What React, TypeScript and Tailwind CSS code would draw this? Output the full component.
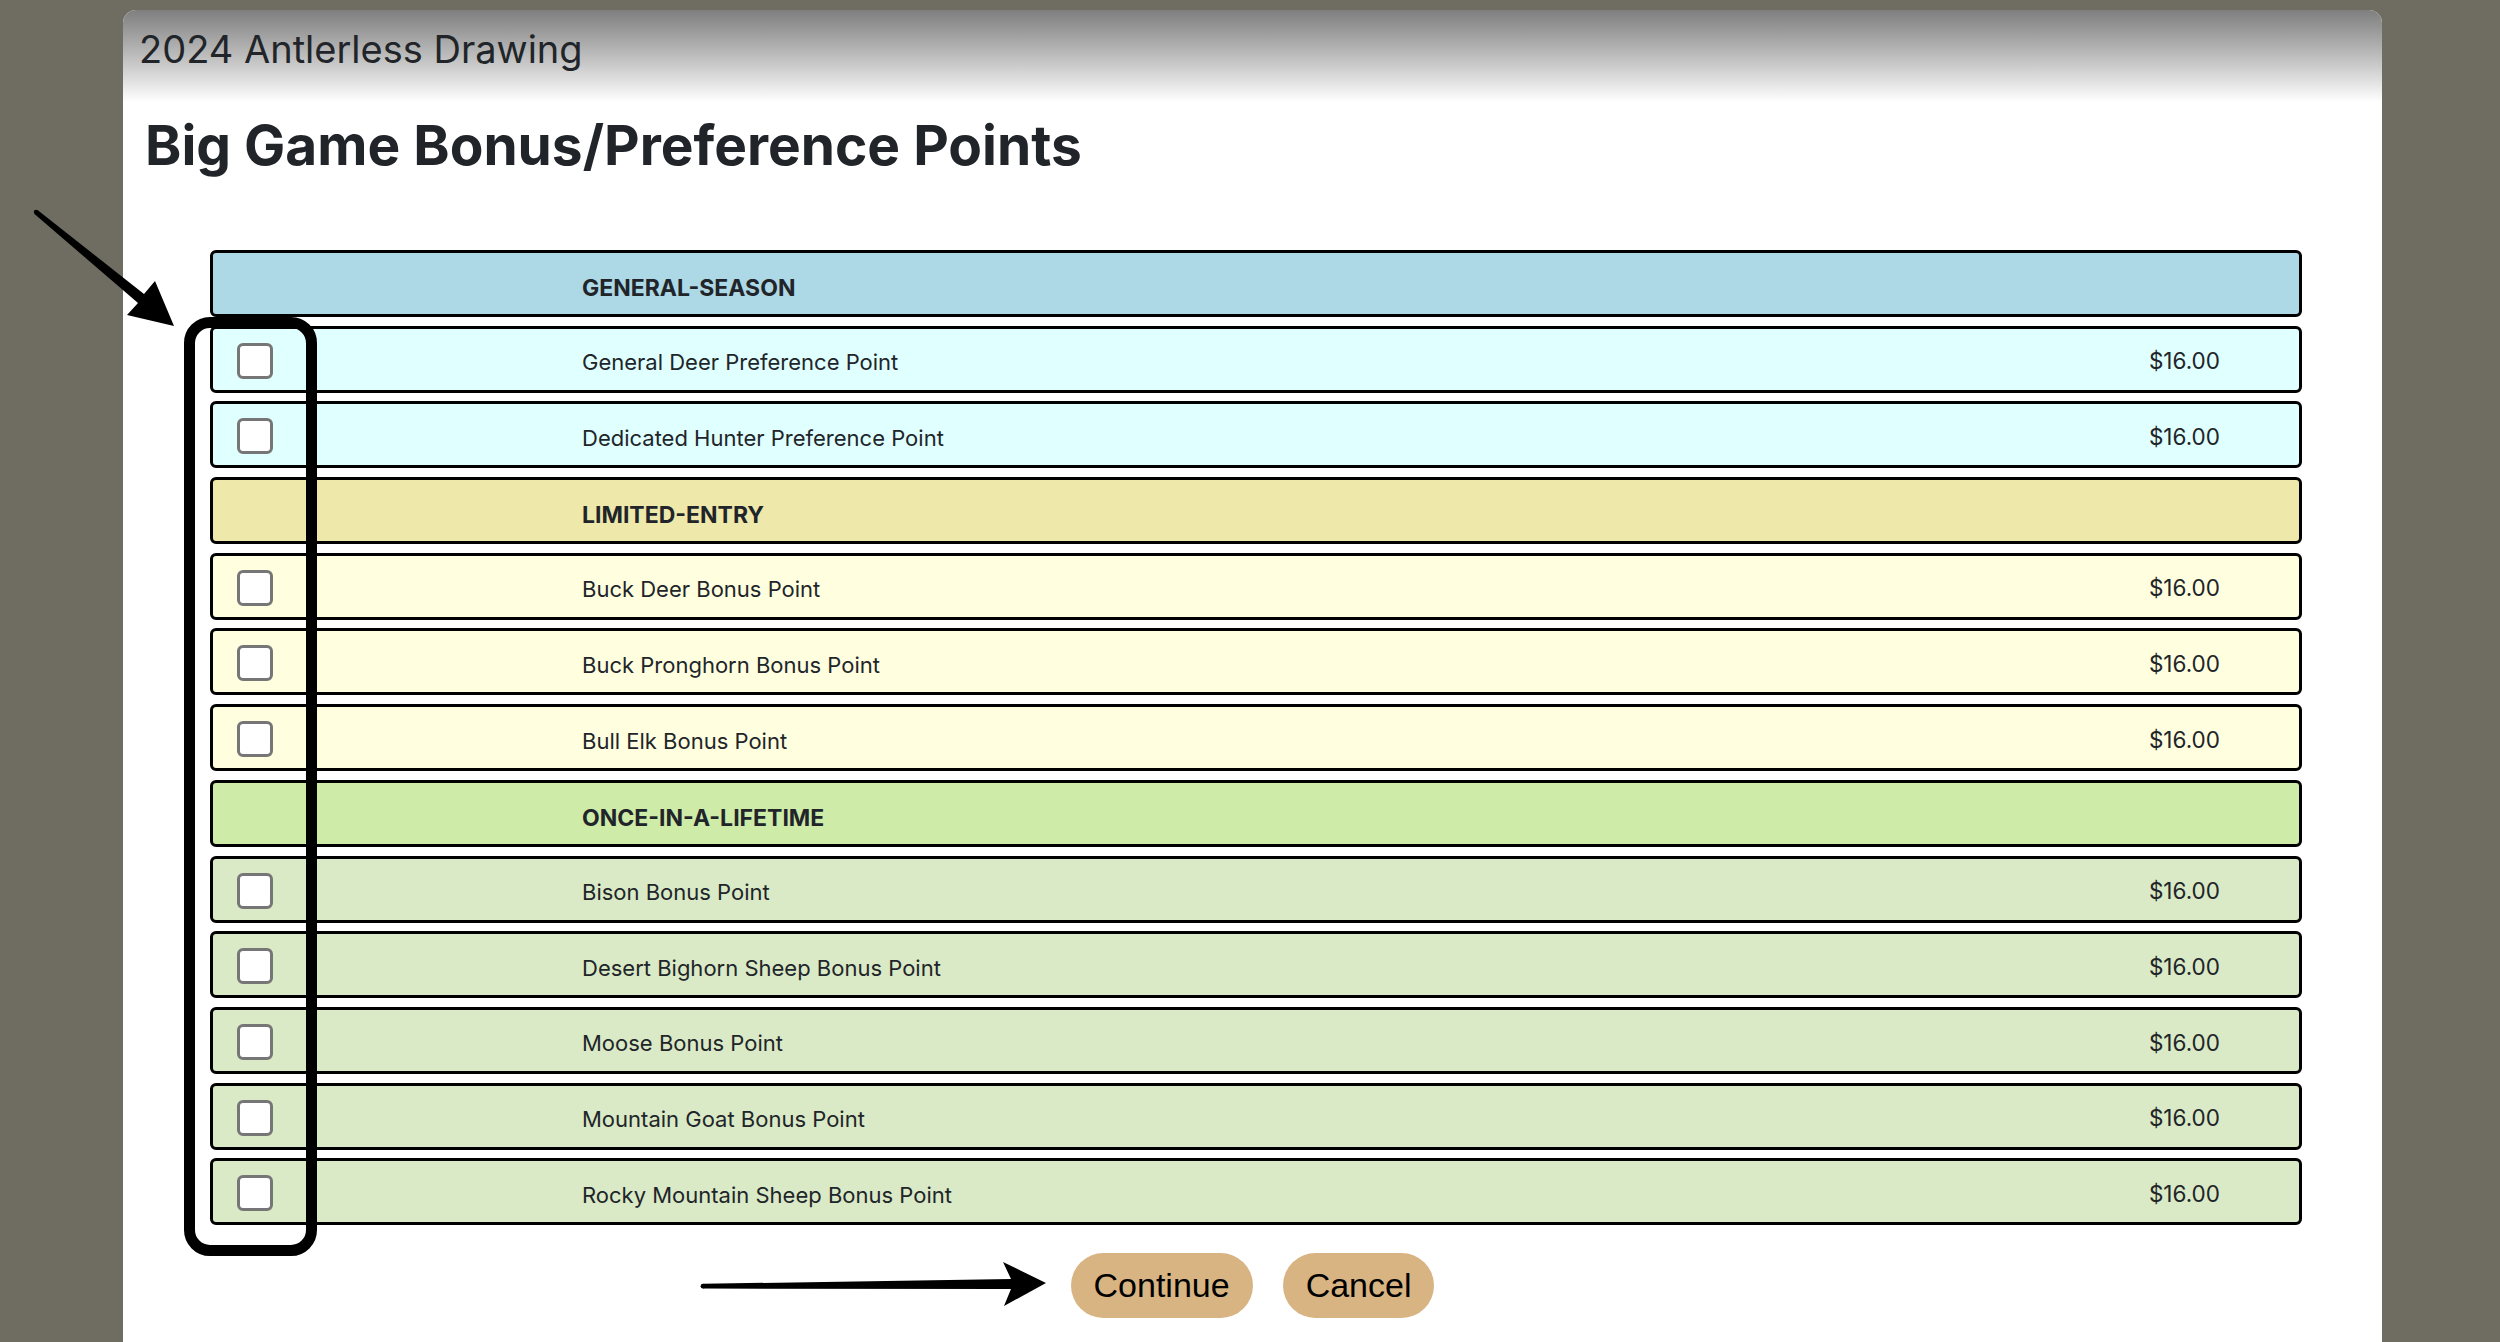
import React from "react";

type Section = {
  title: string;
  headClass: string;
  rowClass: string;
  items: string[];
};

const sections: Section[] = [
  {
    title: "GENERAL-SEASON",
    headClass: "bg-[#add8e6]",
    rowClass: "bg-[#e0ffff]",
    items: ["General Deer Preference Point", "Dedicated Hunter Preference Point"],
  },
  {
    title: "LIMITED-ENTRY",
    headClass: "bg-[#eee8aa]",
    rowClass: "bg-[#ffffe0]",
    items: ["Buck Deer Bonus Point", "Buck Pronghorn Bonus Point", "Bull Elk Bonus Point"],
  },
  {
    title: "ONCE-IN-A-LIFETIME",
    headClass: "bg-[#cfeba8]",
    rowClass: "bg-[#daeac6]",
    items: [
      "Bison Bonus Point",
      "Desert Bighorn Sheep Bonus Point",
      "Moose Bonus Point",
      "Mountain Goat Bonus Point",
      "Rocky Mountain Sheep Bonus Point",
    ],
  },
];

const App = () => {
  return (
    <div className="relative min-h-screen overflow-hidden bg-[#6f6d62] font-['Inter','Noto_Sans',sans-serif] text-[#212529]">
      <div className="ml-[123px] mt-[10px] h-[1332px] w-[2259px] overflow-hidden rounded-t-[13px] bg-white">
        {/* Title bar */}
        <div className="h-[92px] bg-linear-to-b from-[#7f7f7f] to-white pl-[16px] pt-[20px]">
          <div className="text-[38px] leading-[39px]">2024 Antlerless Drawing</div>
        </div>

        <h1 className="mt-[16px] pl-[22px] text-[55px] font-bold leading-[55px]">
          Big Game Bonus/Preference Points
        </h1>

        {/* Points table */}
        <div className="ml-[87px] mt-[77px] flex w-[2092px] flex-col gap-[8.7px]">
          {sections.map((section) => (
            <React.Fragment key={section.title}>
              <div
                className={`flex h-[67px] items-center rounded-[6px] border-[3px] border-black ${section.headClass}`}
              >
                <div className="w-[369px]" />
                <div className="pt-[9px] text-[23px] font-bold">{section.title}</div>
              </div>
              {section.items.map((item) => (
                <div
                  key={item}
                  className={`flex h-[67px] items-center rounded-[6px] border-[3px] border-black ${section.rowClass}`}
                >
                  <div className="w-[369px] pl-[24px] pt-[3px]">
                    <input
                      type="checkbox"
                      className="block h-[36px] w-[36px] appearance-none rounded-[6px] border-[3px] border-[#767676] bg-white"
                    />
                  </div>
                  <div className="flex-1 pt-[7px] text-[22px]">{item}</div>
                  <div className="pr-[79px] pt-[4px] text-[22.5px]">$16.00</div>
                </div>
              ))}
            </React.Fragment>
          ))}
        </div>

        {/* Actions */}
        <div className="mt-[28px] flex justify-center gap-[30px] font-['Liberation_Sans',Arial,sans-serif] text-[34px] text-black">
          <button className="h-[65px] rounded-full bg-[#d8b482] px-[23px]">Continue</button>
          <button className="h-[65px] rounded-full bg-[#d8b482] px-[23px]">Cancel</button>
        </div>
      </div>

      {/* Annotation: box around checkboxes */}
      <div className="pointer-events-none absolute left-[184px] top-[317px] h-[939px] w-[133px] rounded-[26px] border-[11px] border-black" />

      {/* Annotation arrows */}
      <svg
        className="pointer-events-none absolute left-0 top-0"
        width="2500"
        height="1342"
        viewBox="0 0 2500 1342"
      >
        <polygon
          points="37.5,210 144,294 155,281 174,326 127,315 138,303 34.5,214"
          fill="black"
        />
        <circle cx="36" cy="212" r="2.2" fill="black" />
        <polygon
          points="703,1283.8 1011,1279 1003,1262 1046,1283 1004,1306 1011,1289 703,1288.6"
          fill="black"
        />
        <circle cx="703" cy="1286.2" r="2.4" fill="black" />
      </svg>
    </div>
  );
};

export default App;
